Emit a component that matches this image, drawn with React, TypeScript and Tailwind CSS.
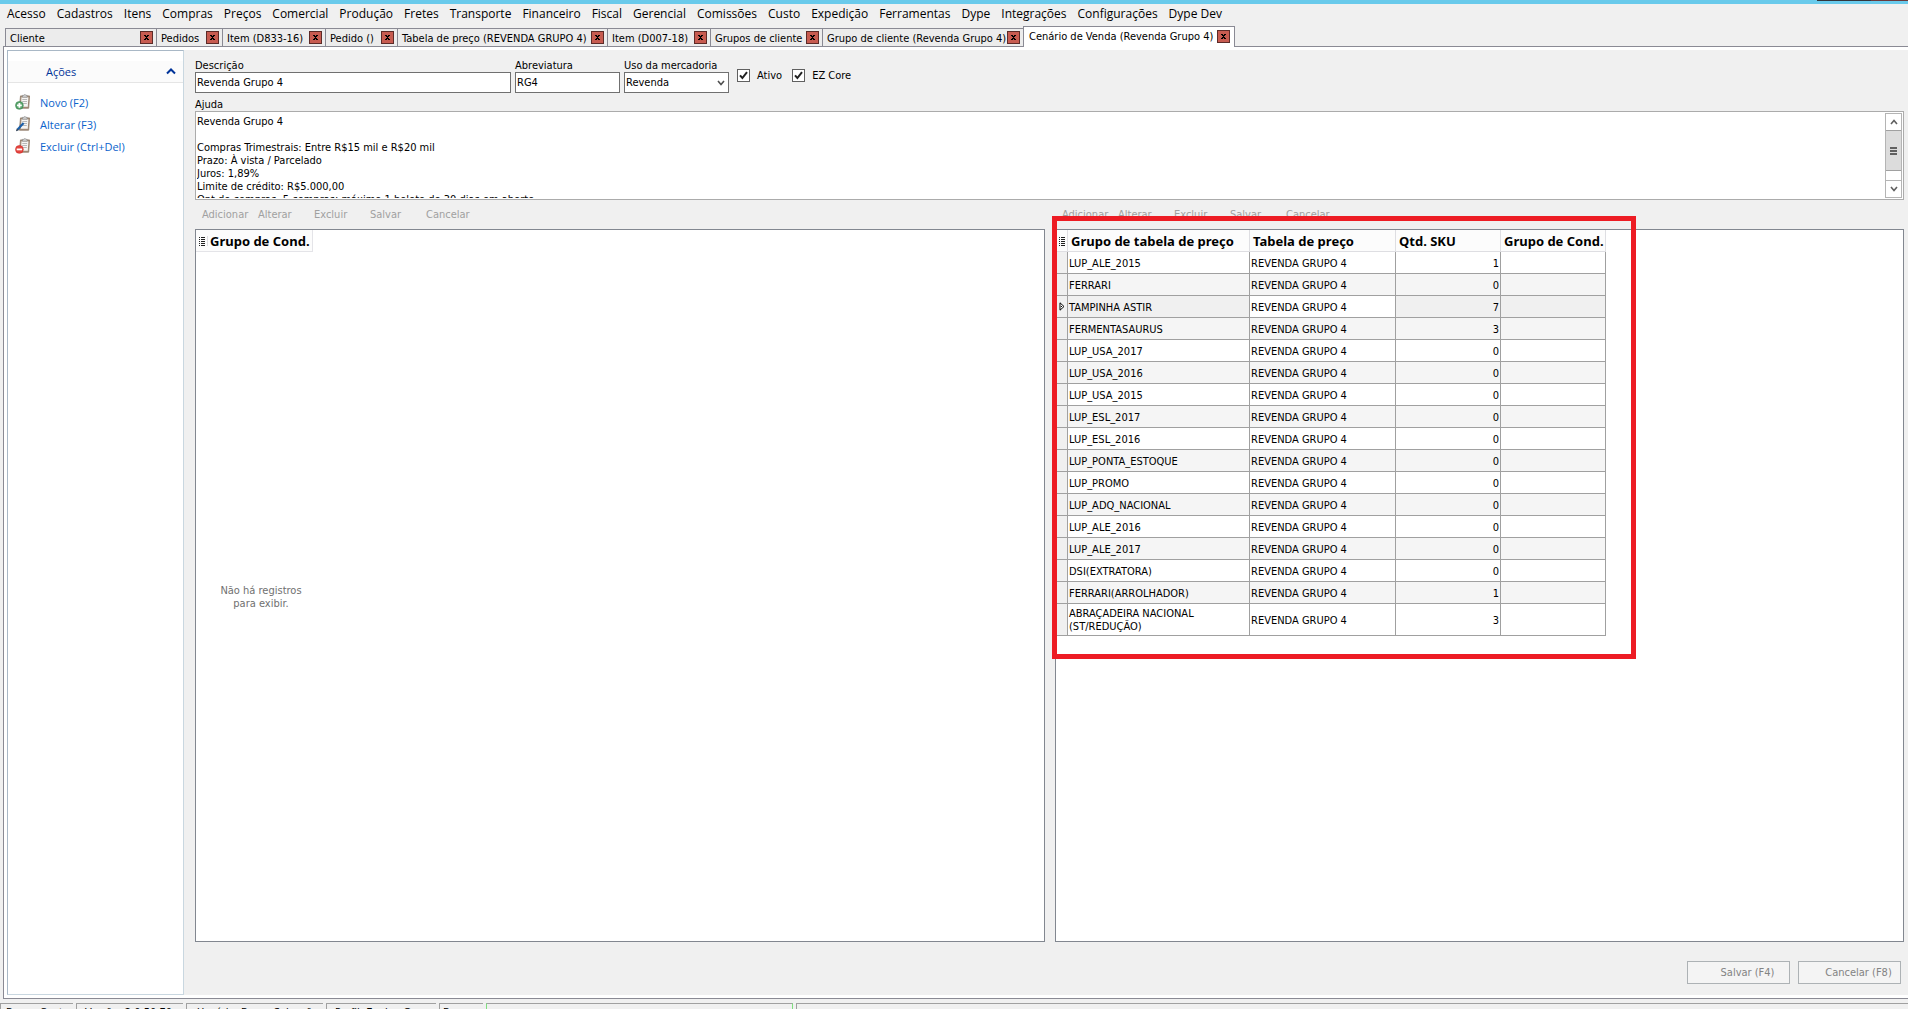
import React from "react";

const menus = [
  "Acesso", "Cadastros", "Itens", "Compras", "Preços", "Comercial", "Produção", "Fretes",
  "Transporte", "Financeiro", "Fiscal", "Gerencial", "Comissões", "Custo", "Expedição",
  "Ferramentas", "Dype", "Integrações", "Configurações", "Dype Dev",
];

const tabs = [
  { title: "Cliente", width: "w-[151px]" },
  { title: "Pedidos", width: "w-[66px]" },
  { title: "Item (D833-16)", width: "w-[103px]" },
  { title: "Pedido ()", width: "w-[72px]" },
  { title: "Tabela de preço (REVENDA GRUPO 4)", width: "w-[210px]" },
  { title: "Item (D007-18)", width: "w-[103px]" },
  { title: "Grupos de cliente", width: "w-[112px]" },
  { title: "Grupo de cliente (Revenda Grupo 4)", width: "w-[201px]" },
];

const rows: [string, number][] = [
  ["LUP_ALE_2015", 1],
  ["FERRARI", 0],
  ["TAMPINHA ASTIR", 7],
  ["FERMENTASAURUS", 3],
  ["LUP_USA_2017", 0],
  ["LUP_USA_2016", 0],
  ["LUP_USA_2015", 0],
  ["LUP_ESL_2017", 0],
  ["LUP_ESL_2016", 0],
  ["LUP_PONTA_ESTOQUE", 0],
  ["LUP_PROMO", 0],
  ["LUP_ADQ_NACIONAL", 0],
  ["LUP_ALE_2016", 0],
  ["LUP_ALE_2017", 0],
  ["DSI(EXTRATORA)", 0],
  ["FERRARI(ARROLHADOR)", 1],
  ["ABRAÇADEIRA NACIONAL (ST/REDUÇÃO)", 3],
];

const ajuda = `Revenda Grupo 4

Compras Trimestrais: Entre R$15 mil e R$20 mil
Prazo: À vista / Parcelado
Juros: 1,89%
Limite de crédito: R$5.000,00
Qnt de compras: 5 compras; máximo 1 boleto de 30 dias em aberto`;

function CloseButton() {
  return (
    <button
      aria-label="Fechar"
      className="flex size-[13px] shrink-0 items-center justify-center border border-[#5c2b28] bg-[#c75b50]"
    >
      <svg width="7" height="5" viewBox="0 0 7 5" shapeRendering="crispEdges">
        <path d="M1 0h2v1h1v-1h2v1h-1v1h-1v1h1v1h1v1h-2v-1h-1v1h-2v-1h1v-1h1v-1h-1v-1h-1z" fill="#000" />
      </svg>
    </button>
  );
}

function ActionIcon({ kind }: { kind: string }) {
  return (
    <svg width="16" height="16" viewBox="0 0 16 16" className="shrink-0">
      <path d="M5.500 1.900h9l-.8 12.300H4.400z" fill="#a68f7a" stroke="#8b7765" strokeWidth=".8" />
      <path d="M6.500 3.300h6.900l-.6 9.500H5.800z" fill="#f6f5f3" />
      <path d="M7.500 1.300h1.300a1.200 1.200 0 0 1 2.200 0h1.200v2H7.500z" fill="#cfcfcf" stroke="#858585" strokeWidth=".6" />
      <path d="M7.300 5.500h4.800M7.200 7.500h4.800M7.100 9.500h4.700" stroke="#a8a8a8" strokeWidth=".8" />
      {kind === "add" && (
        <>
          <circle cx="4.400" cy="11.400" r="3.900" fill="#5aa56c" stroke="#3b8650" strokeWidth=".6" />
          <path d="M4.400 9v4.800M2 11.400h4.800" stroke="#fff" strokeWidth="1.800" />
        </>
      )}
      {kind === "edit" && (
        <>
          <path d="M2.600 13.400 8.600 7" stroke="#1c5fa8" strokeWidth="2.200" />
          <path d="M1 15.200l.8-2.800 1.900 1.800z" fill="#1a2c44" />
        </>
      )}
      {kind === "remove" && (
        <>
          <circle cx="4.400" cy="11.400" r="3.900" fill="#e5453f" stroke="#cc2f2a" strokeWidth=".6" />
          <path d="M1.700 11.400h5.400" stroke="#fff" strokeWidth="1.800" />
        </>
      )}
    </svg>
  );
}

function Indicator() {
  return (
    <svg width="6" height="10" viewBox="0 0 6 10" shapeRendering="crispEdges" className="mx-auto">
      <path d="M0 1.500h1M2 1.500h4M0 3.500h1M2 3.500h4M0 5.500h1M2 5.500h4M0 7.500h1M2 7.500h4M0 9.500h1M2 9.500h4" stroke="#222" />
    </svg>
  );
}

function Toolbar() {
  return (
    <div className="flex h-[29px] items-center pl-[7px] text-[#a0a0a0]">
      <button disabled className="w-14 text-left">Adicionar</button>
      <button disabled className="w-14 text-left">Alterar</button>
      <button disabled className="w-14 text-left">Excluir</button>
      <button disabled className="w-14 text-left">Salvar</button>
      <button disabled className="w-14 text-left">Cancelar</button>
    </div>
  );
}

function Sidebar() {
  return (
    <aside className="w-[177px] shrink-0 border border-[#c9d7e0] border-l-[#a9b8c6] border-t-[#a9b8c6] bg-white pt-[10px] font-['Open_Sans',sans-serif]">
      <button className="flex h-[22px] w-full items-center justify-between border-b border-[#e5e5e5] bg-[#fbfbfb] pr-[7px] pl-[38px] text-[#003399]">
        Ações
        <svg width="10" height="7" viewBox="0 0 10 7">
          <path d="M1 5.500 5 1.500l4 4" fill="none" stroke="#003399" strokeWidth="2" />
        </svg>
      </button>
      <nav className="flex flex-col pt-2 pl-[7px] text-[#0a63cc]">
        <a href="#novo" className="flex h-[22px] items-center gap-[9px]"><ActionIcon kind="add" />Novo (F2)</a>
        <a href="#alterar" className="flex h-[22px] items-center gap-[9px]"><ActionIcon kind="edit" />Alterar (F3)</a>
        <a href="#excluir" className="flex h-[22px] items-center gap-[9px]"><ActionIcon kind="remove" />Excluir (Ctrl+Del)</a>
      </nav>
    </aside>
  );
}

function Check({ id, label }: { id: string; label: string }) {
  return (
    <label htmlFor={id} className="flex items-center gap-[7px]">
      <span className="relative size-[13px]">
        <input id={id} type="checkbox" defaultChecked className="block size-[13px] appearance-none border border-[#606060] bg-white" />
        <svg width="13" height="13" viewBox="0 0 13 13" className="pointer-events-none absolute inset-0">
          <path d="M3 6.300 5.400 9 10 3.200" fill="none" stroke="#222" strokeWidth="2" />
        </svg>
      </span>
      {label}
    </label>
  );
}

function ScrollBar() {
  return (
    <div className="flex w-[17px] flex-col border border-[#b4b4b4] bg-white">
      <button aria-label="Subir" className="flex h-4 items-center justify-center">
        <svg width="8" height="6" viewBox="0 0 8 6"><path d="M1 5l3-3.500L7 5" fill="none" stroke="#606060" strokeWidth="1.600" /></svg>
      </button>
      <div className="flex h-[41px] flex-col items-center justify-center gap-px border-y border-[#a0a0a0] bg-[#dcdcdc]">
        <span className="h-[2px] w-[7px] bg-[#606060]" />
        <span className="h-[2px] w-[7px] bg-[#606060]" />
        <span className="h-[2px] w-[7px] bg-[#606060]" />
      </div>
      <button aria-label="Descer" className="mt-auto flex h-[17px] items-center justify-center border-t border-[#b4b4b4]">
        <svg width="8" height="6" viewBox="0 0 8 6"><path d="M1 1l3 3.500L7 1" fill="none" stroke="#606060" strokeWidth="1.600" /></svg>
      </button>
    </div>
  );
}

function Form() {
  const label = "block h-[14px] pt-px whitespace-nowrap";
  const field = "h-[21px] w-full border border-[#707070] bg-white px-px";
  return (
    <>
      <div className="flex gap-1 pt-2">
        <div className="w-[316px]">
          <label htmlFor="descricao" className={label}>Descrição</label>
          <input id="descricao" defaultValue="Revenda Grupo 4" className={field} />
        </div>
        <div className="w-[105px]">
          <label htmlFor="abreviatura" className={label}>Abreviatura</label>
          <input id="abreviatura" defaultValue="RG4" className={field} />
        </div>
        <div className="w-[105px]">
          <label htmlFor="uso" className={label}>Uso da mercadoria</label>
          <div className="relative">
            <select id="uso" className={`${field} appearance-none`}>
              <option>Revenda</option>
            </select>
            <svg width="8" height="6" viewBox="0 0 8 6" className="pointer-events-none absolute top-2 right-1">
              <path d="M1 1l3 3.500L7 1" fill="none" stroke="#505050" strokeWidth="1.600" />
            </svg>
          </div>
        </div>
        <div className="mt-[11px] ml-1 flex h-[13px] gap-[10px]">
          <Check id="ativo" label="Ativo" />
          <Check id="ezcore" label="EZ Core" />
        </div>
      </div>
      <label htmlFor="ajuda" className={`${label} mt-1`}>Ajuda</label>
      <div className="flex h-[89px] border border-[#ababab] bg-white p-px">
        <textarea id="ajuda" defaultValue={ajuda} className="h-[85px] flex-1 resize-none overflow-hidden pt-[2px]" />
        <ScrollBar />
      </div>
    </>
  );
}

function PriceTable() {
  const th = "border-r border-b border-[#dedee2] bg-[#fcfcfc] px-[3px] text-left";
  const td = "border-r border-b border-[#a0a0a0] px-px pt-px";
  return (
    <table className="w-[550px] table-fixed border-separate border-spacing-0">
      <colgroup>
        <col className="w-[12px]" />
        <col className="w-[182px]" />
        <col className="w-[146px]" />
        <col className="w-[105px]" />
        <col className="w-[105px]" />
      </colgroup>
      <thead>
        <tr className="h-[22px] font-['Noto_Sans',sans-serif] text-[13px] leading-4 whitespace-nowrap">
          <th className="border-r border-b border-[#dedee2] bg-[#fcfcfc]"><Indicator /></th>
          <th className={th}>Grupo de tabela de preço</th>
          <th className={th}>Tabela de preço</th>
          <th className={th}>Qtd. SKU</th>
          <th className={th}>Grupo de Cond.</th>
        </tr>
      </thead>
      <tbody>
        {rows.map(([grupo, qtd], i) => {
          const focused = i === 2;
          const height = i === rows.length - 1 ? "h-[32px]" : "h-[22px]";
          const bg = focused ? "bg-[#f0f0f0]" : i % 2 ? "bg-[#f5f5f5]" : "bg-white";
          return (
            <tr key={grupo} className={`${height} ${bg}`}>
              <td className="border-r border-b border-[#a0a0a0] bg-[#f0f0f0]">
                {focused && (
                  <svg width="6" height="9" viewBox="0 0 6 9" className="mr-[2px] ml-auto">
                    <path d="M1 .8v7.400L5 4.500z" fill="#fff" stroke="#000" />
                    <path d="M2 4.500h1" stroke="#000" />
                  </svg>
                )}
              </td>
              <td className={`${td} pr-8`}>{grupo}</td>
              <td className={focused ? `${td} bg-white` : td}>REVENDA GRUPO 4</td>
              <td className={`${td} text-right`}>{qtd}</td>
              <td className={td}></td>
            </tr>
          );
        })}
      </tbody>
    </table>
  );
}

export default function App() {
  const status = "border-t border-l border-[#a0a0a0] pt-[2px]";
  return (
    <div className="flex h-screen flex-col overflow-hidden bg-[#f0f0f0] font-['DejaVu_Sans_Condensed','DejaVu_Sans',sans-serif] text-[11px] leading-[13px] text-black">
      <div className="flex h-[4px] shrink-0 items-start justify-end bg-[#69caeb]">
        <span className="h-px w-[54px] bg-[#33363c]" />
        <span className="h-px w-[37px] bg-[#6a3a3c]" />
      </div>

      <nav className="flex h-[19px] shrink-0 items-center gap-[11px] pl-[7px] font-['Open_Sans',sans-serif] text-[12px] whitespace-nowrap">
        {menus.map((m) => (
          <button key={m}>{m}</button>
        ))}
      </nav>

      <div className="flex h-[23px] shrink-0 items-end pl-[5px] whitespace-nowrap">
        {tabs.map((t) => (
          <div
            key={t.title}
            className={`${t.width} flex h-[18px] items-center justify-between border-t border-l border-[#8a8a94] bg-[#ececec] pr-[3px] pl-1`}
          >
            <button className="pt-px">{t.title}</button>
            <CloseButton />
          </div>
        ))}
        <div className="relative z-10 -mb-px flex h-[21px] w-[212px] items-center justify-between border-x border-t border-[#8a8a94] bg-white pr-[4px] pb-[2px] pl-[5px]">
          <button>Cenário de Venda (Revenda Grupo 4)</button>
          <CloseButton />
        </div>
      </div>

      <div className="mb-1 ml-[3px] flex min-h-0 flex-1 border-y border-l border-[#8a8a94] bg-white py-[3px] pl-[3px]">
        <Sidebar />
        <main className="flex min-w-0 flex-1 flex-col bg-[#f0f0f0] pr-1 pl-[11px]">
          <Form />
          <div className="grid min-h-0 flex-1 grid-cols-[850fr_849fr] gap-[10px]">
            <section className="flex flex-col">
              <Toolbar />
              <div className="flex flex-1 flex-col border border-[#828790] bg-white">
                <div className="flex h-[22px] w-[117px] items-center border-r border-b border-[#e4e4e8] bg-[#fcfcfc] font-['Noto_Sans',sans-serif] text-[13px] leading-4 font-bold whitespace-nowrap">
                  <span className="flex w-3 shrink-0 border-r border-[#dedee2]"><Indicator /></span>
                  <span className="pl-[2px]">Grupo de Cond.</span>
                </div>
                <p className="flex w-[130px] flex-1 items-center justify-center text-center text-[#707070]">
                  Não há registros<br />para exibir.
                </p>
              </div>
            </section>
            <section className="relative flex flex-col">
              <Toolbar />
              <div className="flex-1 border border-[#828790] bg-white">
                <PriceTable />
              </div>
              <div className="pointer-events-none absolute top-4 -left-[3px] h-[443px] w-[584px] border-5 border-[#ed1c24]" />
            </section>
          </div>
          <div className="flex h-[53px] shrink-0 justify-end gap-2 pt-[19px] pr-[3px] text-[#838383]">
            <button disabled className="h-[23px] w-[103px] border border-[#adb2b5] bg-[#f4f4f4] pl-[18px]">Salvar (F4)</button>
            <button disabled className="h-[23px] w-[103px] border border-[#adb2b5] bg-[#f4f4f4] pl-[18px]">Cancelar (F8)</button>
          </div>
        </main>
      </div>

      {/* only the top edge of the status bar stays on screen */}
      <footer className="-mb-[14px] flex h-5 shrink-0 gap-[3px] whitespace-nowrap">
        <div className={`${status} w-[73px] pl-[5px]`}>Banco Contr</div>
        <div className={`${status} w-[107px] pl-2`}>Versão: 2.0.50.70</div>
        <div className={`${status} w-[137px] pl-[10px]`}>Usuário: Bruno Salvação</div>
        <div className={`${status} w-[110px] pl-2`}>Perfil: Equipe Grupo</div>
        <div className={`${status} w-[44px] pl-[3px]`}>Banco</div>
        <div className="w-[307px] border-x border-t border-x-[#7fe07f] border-t-[#a0a0a0]" />
        <div className={`${status} flex-1`} />
      </footer>
    </div>
  );
}
